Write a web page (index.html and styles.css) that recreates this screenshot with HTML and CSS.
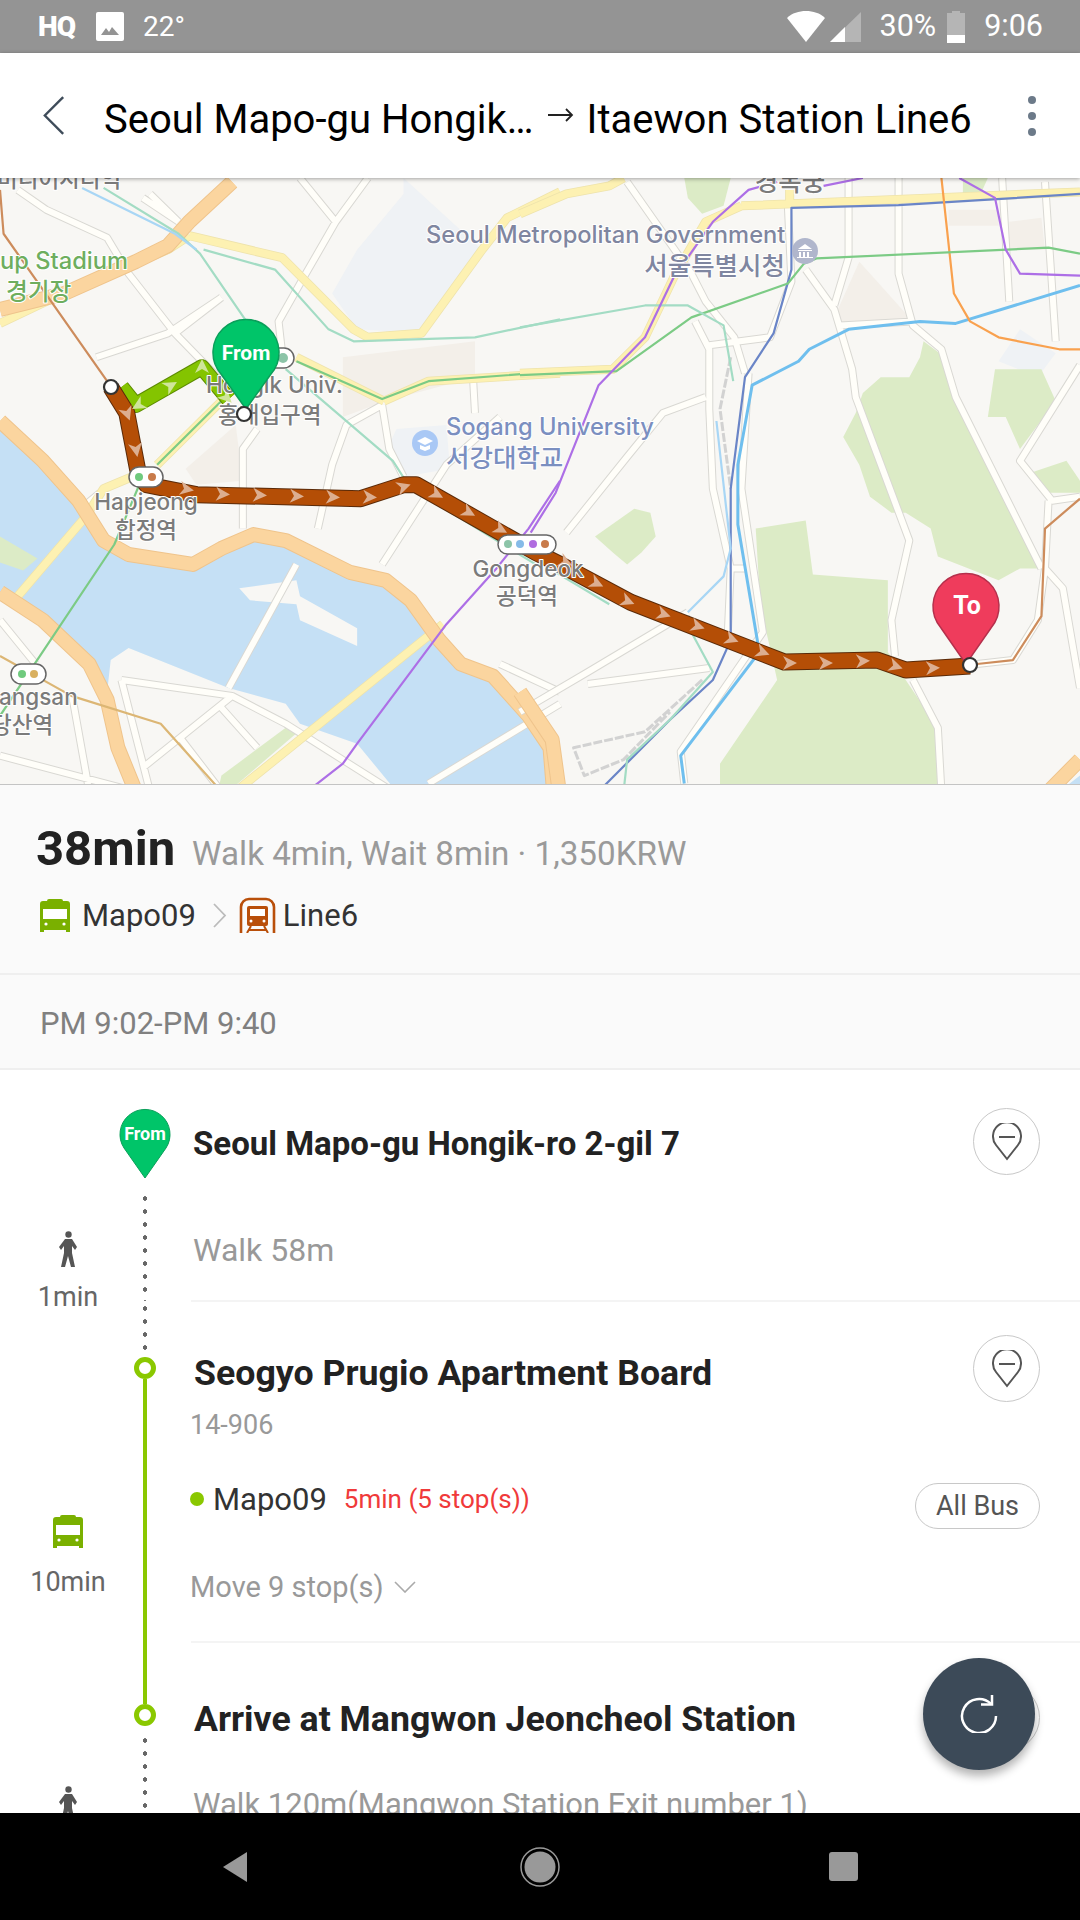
FILE: index.html
```html
<!DOCTYPE html>
<html lang="en">
<head>
<meta charset="utf-8">
<title>Route</title>
<link rel="stylesheet" href="styles.css">
</head>
<body>
<div class="screen">
  <div class="status">
    <span class="st-hq">HQ</span>
    <svg class="st-img" viewBox="0 0 28 29"><rect width="28" height="29" rx="2" fill="#fff"/><path d="M5 23l5-7 3 4 3-5 7 8z" fill="#949494"/></svg>
    <span class="st-text st-temp">22°</span>
    <span class="st-spacer"></span>
    <svg class="st-wifi" viewBox="0 0 38 31"><path d="M0 7C5 2 12 0 19 0s14 2 19 7L19 31z" fill="#fff"/></svg>
    <svg class="st-signal" viewBox="0 0 31 30"><path d="M31 0v30H0z" fill="#b5b5b5"/><path d="M15 15v15H0z" fill="#fff"/></svg>
    <span class="st-text st-pct">30%</span>
    <svg class="st-batt" viewBox="0 0 18 32"><path d="M5 2V0h8v2h5v30H0V2z" fill="#b5b5b5"/><path d="M0 24h18v8H0z" fill="#fff"/></svg>
    <span class="st-text st-clock">9:06</span>
  </div>

  <header class="bar">
    <svg class="bar-back" viewBox="0 0 24 42"><path d="M22 1L2 21l20 20" fill="none" stroke="#3f4c5a" stroke-width="2.6"/></svg>
    <span class="bar-from">Seoul Mapo-gu Hongik…</span>
    <svg class="bar-arrow" viewBox="0 0 26 14"><path d="M0 7h24M18 1l6 6-6 6" fill="none" stroke="#222" stroke-width="1.8"/></svg>
    <span class="bar-to">Itaewon Station Line6</span>
    <span class="bar-more"><i></i><i></i><i></i></span>
  </header>

  <div class="map">
    <svg class="map-svg" viewBox="0 178 1080 607" preserveAspectRatio="none">
      <rect x="0" y="178" width="1080" height="607" fill="#f8f7f4"/>
      <g class="zoom-a">
        <defs>
          <path id="roadsA" d="M50 50L130 100L300 170L360 260L490 410L620 530M500 130L420 60M270 470L470 410L620 320M490 410L620 320M840 20L940 130L1030 20M940 130L850 270L780 380L790 460M400 70L500 130M680 900L680 700L720 650M890 900L930 740L970 640L1070 590M1070 590L1090 700L1130 770M1325 530L1330 610M1070 990L1250 740L1400 620M830 990L640 1300M340 1280L650 1320L800 1390L1100 1560M650 1320L400 1500M620 1350L720 1450M200 1310L250 1560M0 1130L100 1240M0 1470L380 1560M500 1420L620 1560M1400 1240L1568 1310M1200 1540L1568 1340M340 1280L420 1560M280 810L240 840"/>
          <path id="yellowA" d="M530 165L790 220L990 400L1030 420L1180 410L1350 200L1420 120L1568 55M1075 580L1200 530L1568 510M1075 580L830 470M0 385L200 300L470 200L530 165M40 1080L240 870L290 800L370 770M660 1560L1240 1140M440 740L620 580"/>
          <path id="orangeA" d="M0 630L120 730L220 830L290 930L360 965L540 990L620 950L710 915L800 930L980 1010L1080 1030L1150 1080L1230 1180L1290 1240L1380 1270L1480 1370L1540 1450L1550 1560M0 1060L120 1130L250 1240L300 1330L330 1450L380 1560M0 350L180 310L380 230L470 190L530 130L650 30"/>
          <path id="greenRoute" d="M640 575L565 495L380 590L340 545"/>
          <path id="brownA" d="M310 545L355 610L385 750L410 790L550 815L1010 825L1130 790L1165 790L1500 960L1568 990"/>
        </defs>
        <path class="area pale" d="M1130 20L1350 200L1180 410L1000 400L930 310L1000 200L1130 60Z"/>
        <path class="area pale" d="M1110 650L1250 640L1260 750L1130 770L1090 690Z"/>
        <path class="area tan" d="M960 470L1330 430L1330 520L1080 580L960 620Z"/>
        <path class="area tan" d="M520 750L660 640L680 780L550 790Z"/>
        <path class="area water" d="M0 640L120 730L220 830L290 930L360 965L540 990L620 950L710 915L800 930L980 1010L1080 1030L1150 1080L1230 1180L1290 1240L1380 1270L1480 1370L1540 1450L1560 1560L1110 1560L1000 1440L840 1390L800 1340L640 1300L360 1200L310 1230L300 1310L250 1240L120 1130L0 1060Z"/>
        <path class="area island" d="M670 1050L830 1030L840 1070L1000 1150L1000 1195L840 1130L830 1090L700 1080Z"/>
        <path class="area park" d="M0 920L105 975L65 1005L0 985Z"/>
        <path class="area park" d="M620 1520L800 1400L835 1410L640 1560L610 1560Z"/>
        <use href="#roadsA" class="road-o"/><use href="#roadsA" class="road-i"/>
        <use href="#yellowA" class="yel-o"/><use href="#yellowA" class="yel-i"/>
        <use href="#orangeA" class="ora-o"/><use href="#orangeA" class="ora-i"/>
        <path class="sub mint" d="M290 45L500 160L560 210L690 380M800 500L1100 730L1150 800L1300 880L1500 990M570 200L770 250L920 400L990 430L1330 420L1568 375"/>
        <path class="sub sky" d="M230 45L490 160L550 200"/>
        <path class="sub brown" d="M0 50L10 160L300 530"/>
        <path class="sub green" d="M0 1370L320 940L390 790M440 740L620 580M830 480L1070 575L1200 530L1568 505"/>
        <path class="sub tanline" d="M0 1220L200 1320L450 1390L620 1560"/>
        <path class="sub purple" d="M860 1560L960 1490L1000 1440L1250 1140L1390 1000L1480 900L1568 780"/>
      </g>
      <g class="zoom-b">
        <defs>
          <path id="roadsB" d="M300 30L480 260L520 330L600 420L630 510M490 380L530 450L530 600L540 800L590 1000L580 1200M530 440L700 420L760 280L750 90M800 250L880 350L930 500L940 570L1090 930L1040 1130L1050 1220M920 20L920 220L880 340M1060 20L1060 260L1100 390L1180 450L1220 570L1460 1000M895 390L1100 380M1350 20L1370 330M1470 30L1500 430M1568 490L1400 730L1490 830L1568 820M1480 830L1470 1000L1520 1050L1568 1300M640 510L620 800L680 1160L450 1460L460 1540M1100 1280L1170 1400L1180 1560M520 570L400 610L300 720L130 910M590 1000L630 1000M0 1360L190 1260L470 1110M190 1290L530 1250M1280 1240L1380 1230L1450 1130L1470 1000"/>
          <path id="yellowB" d="M620 90L1568 55M755 50L755 90M620 90L520 130L430 270L350 420L260 500L0 510M0 110L130 60L250 40L290 20"/>
          <path id="orangeB" d="M0 1310L90 1430L110 1560M1480 1560L1568 1480"/>
          <path id="brownB" d="M112 990L310 1085L740 1235L1000 1230L1080 1255L1260 1245"/>
        </defs>
        <path class="area tan" d="M890 350L950 230L1000 280L1090 370L900 390Z"/>
        <path class="area tan" d="M1200 100L1340 100L1340 140L1200 140ZM1370 130L1460 120L1470 200L1370 200Z"/>
        <path class="area pale" d="M1340 480L1400 400L1500 460L1450 520Z"/>
        <path class="area park" d="M960 560L1010 520L1090 520L1120 470L1130 430L1190 470L1220 570L1470 1000L1400 1000L1340 1030L1170 970L1150 900L1080 860L1040 860L980 820L950 740L905 670L940 610Z"/>
        <path class="area park" d="M660 900L800 880L820 1015L1030 1030L1030 1210L1080 1280L1170 1400L1180 1560L560 1560L560 1490L720 1280L690 1160L670 1050Z"/>
        <path class="area park" d="M210 920L320 850L365 860L380 920L340 960L300 990L260 960Z"/>
        <path class="area park" d="M460 20L590 20L570 90L510 110L470 70Z"/>
        <path class="area park" d="M1330 500L1460 500L1500 580L1400 700L1360 620L1310 620Z"/>
        <path class="area park" d="M1430 760L1530 730L1568 780L1568 810L1480 810Z"/>
        <path class="area park" d="M1240 20L1310 20L1290 60L1240 60Z"/>
        <path class="area water" d="M0 1420L50 1440L70 1560L0 1560ZM1510 1560L1568 1520L1568 1560Z"/>
        <use href="#roadsB" class="road-o"/><use href="#roadsB" class="road-i"/>
        <use href="#yellowB" class="yel-o"/><use href="#yellowB" class="yel-i"/>
        <use href="#orangeB" class="ora-o"/><use href="#orangeB" class="ora-i"/>
        <path class="railway" d="M590 470L560 600L590 800M510 1280L350 1410L150 1450L180 1520L290 1480L420 1360"/>
        <path class="sub indigo" d="M220 1560L420 1380L540 1280L590 1180L590 800L630 520L710 410L760 250L760 95L1060 88L1300 75L1568 60"/>
        <path class="sub bright" d="M460 1540L450 1470L670 1210L610 890L610 740L650 540L780 480L810 450L920 400L1120 380L1220 385L1568 290"/>
        <path class="sub amber" d="M1180 20L1215 310L1260 380L1340 420L1510 450L1568 450"/>
        <path class="sub green" d="M0 515L270 505L480 370L750 285L795 235L830 222L1480 195L1568 210"/>
        <path class="sub mint" d="M0 395L350 340L470 340L570 390L597 530M100 1010L250 1090M480 1160L540 1260L420 1380L300 1480L290 1560"/>
        <path class="sub sky" d="M550 630L590 950L570 1020L470 1110"/>
        <path class="sub brown" d="M1280 1240L1380 1230L1460 1120L1470 900L1568 825"/>
        <path class="sub purple" d="M30 910L100 810L220 540L350 420L430 270L540 130L640 50L720 30M850 40L960 20M1230 20L1330 70L1360 200L1400 260L1568 265"/>
      </g>

      <g class="zoom-a">
        <use href="#greenRoute" class="route-g-o"/><use href="#greenRoute" class="route-g-i"/>
        <use href="#brownA" class="route-o"/><use href="#brownA" class="route-i"/>
      </g>
      <g class="zoom-b">
        <use href="#brownB" class="route-o"/><use href="#brownB" class="route-i"/>
      </g>
      <defs><path id="chev" d="M-6-7L8 0L-6 7L-2 0Z"/></defs>
      <g class="arrows-g">
        <use href="#chev" transform="translate(139 405) rotate(150)"/>
        <use href="#chev" transform="translate(170 386) rotate(-30)"/>
        <use href="#chev" transform="translate(202 367) rotate(-90)"/>
        <use href="#chev" transform="translate(226 397) rotate(45)"/>
      </g>
      <g class="arrows">
        <use href="#chev" transform="translate(127 413) rotate(70)"/>
        <use href="#chev" transform="translate(136 449) rotate(80)"/>
        <use href="#chev" transform="translate(186 489) rotate(10)"/>
        <use href="#chev" transform="translate(222 494) rotate(3)"/>
        <use href="#chev" transform="translate(259 495) rotate(3)"/>
        <use href="#chev" transform="translate(296 496) rotate(3)"/>
        <use href="#chev" transform="translate(332 497) rotate(3)"/>
        <use href="#chev" transform="translate(369 497) rotate(3)"/>
        <use href="#chev" transform="translate(403 487) rotate(-18)"/>
        <use href="#chev" transform="translate(436 494) rotate(28)"/>
        <use href="#chev" transform="translate(468 512) rotate(28)"/>
        <use href="#chev" transform="translate(500 529) rotate(28)"/>
        <use href="#chev" transform="translate(565 562) rotate(25)"/>
        <use href="#chev" transform="translate(596 583) rotate(25)"/>
        <use href="#chev" transform="translate(627 601) rotate(22)"/>
        <use href="#chev" transform="translate(663 614) rotate(18)"/>
        <use href="#chev" transform="translate(697 626) rotate(18)"/>
        <use href="#chev" transform="translate(731 639) rotate(20)"/>
        <use href="#chev" transform="translate(762 652) rotate(20)"/>
        <use href="#chev" transform="translate(789 663) rotate(0)"/>
        <use href="#chev" transform="translate(825 663) rotate(0)"/>
        <use href="#chev" transform="translate(862 661) rotate(-2)"/>
        <use href="#chev" transform="translate(895 666) rotate(18)"/>
        <use href="#chev" transform="translate(932 668) rotate(-2)"/>
      </g>

      <text class="lb lb-gray lb-sm" x="-3" y="187">미디어시티역</text>
      <text class="lb lb-gray lb-ko" x="790" y="191" text-anchor="middle">경복궁</text>
      <text class="lb lb-navy" x="426" y="243">Seoul Metropolitan Government</text>
      <text class="lb lb-navy lb-ko" x="785" y="275" text-anchor="end">서울특별시청</text>
      <circle cx="805" cy="251" r="13" fill="#b0b6cc"/>
      <path d="M798 249l7-5 7 5zM798 250h14v1h-14zM799 252h2v5h-2zM803 252h2v5h-2zM807 252h2v5h-2zM797 257h16v1h-16z" fill="#fff"/>
      <text class="lb lb-green" x="0" y="269">up Stadium</text>
      <text class="lb lb-green" x="6" y="300">경기장</text>
      <text class="lb lb-gray lb-sm" x="206" y="393">Hongik Univ.</text>
      <text class="lb lb-gray lb-sm" x="218" y="423">홍대입구역</text>
      <circle cx="425" cy="443" r="13" fill="#a9c8f5"/>
      <path d="M417 441l8-4 8 4-8 4zM420 445v4l5 2 5-2v-4l-5 2z" fill="#fff"/>
      <text class="lb lb-blue" x="446" y="435">Sogang University</text>
      <text class="lb lb-blue lb-ko" x="446" y="467">서강대학교</text>
      <text class="lb lb-gray lb-sm" x="146" y="510" text-anchor="middle">Hapjeong</text>
      <text class="lb lb-gray lb-sm" x="146" y="538" text-anchor="middle">합정역</text>
      <text class="lb lb-gray lb-sm" x="528" y="577" text-anchor="middle">Gongdeok</text>
      <text class="lb lb-gray lb-sm" x="527" y="604" text-anchor="middle">공덕역</text>
      <text class="lb lb-gray lb-sm" x="-1" y="705">angsan</text>
      <text class="lb lb-gray lb-sm" x="-9" y="733">당산역</text>

      <rect class="pill" x="263" y="348" width="31" height="20" rx="10"/><circle cx="283" cy="358" r="5" fill="#8cc4a8"/>
      <rect class="pill" x="129" y="467" width="34" height="20" rx="10"/><circle cx="139" cy="477" r="4" fill="#6fca7e"/><circle cx="152" cy="477" r="4" fill="#c87a4a"/>
      <rect class="pill" x="498" y="535" width="58" height="19" rx="9.5"/><circle cx="508" cy="544" r="4" fill="#8cc4a8"/><circle cx="520" cy="544" r="4" fill="#86bbe8"/><circle cx="533" cy="544" r="4" fill="#b06ce0"/><circle cx="545" cy="544" r="4" fill="#c87a4a"/>
      <rect class="pill" x="11" y="664" width="35" height="20" rx="10"/><circle cx="22" cy="674" r="4" fill="#6fca7e"/><circle cx="34" cy="674" r="4" fill="#d9b060"/>

      <circle class="node" cx="111" cy="387" r="7"/>
      <path class="pin-g" d="M246 409L221 374A33 33 0 1 1 271 374Z"/>
      <text class="pin-text" x="246" y="360" text-anchor="middle">From</text>
      <circle class="node" cx="244" cy="414" r="7"/>
      <path class="pin-r" d="M966 664L941 628A33 33 0 1 1 991 628Z"/>
      <text class="pin-text pin-text-to" x="967" y="614" text-anchor="middle">To</text>
      <circle class="node" cx="970" cy="665" r="7"/>
    </svg>
  </div>

  <section class="summary">
    <div class="sum-top"><span class="sum-time">38min</span><span class="sum-sub">Walk 4min, Wait 8min · 1,350KRW</span></div>
    <div class="sum-lines">
      <svg class="ic-bus" viewBox="0 0 30 33"><path d="M0 5q0-3 3-3h4q0-2 2-2h12q2 0 2 2h4q3 0 3 3v28h-4v-2H4v2H0z" fill="#7ab000"/><path d="M3 10h24v10H3z" fill="#fff"/><circle cx="6" cy="25" r="1.6" fill="#fff"/><circle cx="24" cy="25" r="1.6" fill="#fff"/></svg>
      <span class="sum-name">Mapo09</span>
      <svg class="ic-next" viewBox="0 0 14 25"><path d="M1 1l11 11.500L1 24" fill="none" stroke="#bbb" stroke-width="1.8"/></svg>
      <svg class="ic-train" viewBox="0 0 37 36"><path d="M2 36V10a8 8 0 0 1 8-8h17a8 8 0 0 1 8 8v26" fill="none" stroke="#b94f0a" stroke-width="2.600"/><rect x="8" y="9" width="21" height="20" rx="2" fill="#b94f0a"/><rect x="11" y="12" width="15" height="7" fill="#fff"/><circle cx="12" cy="24" r="1.500" fill="#fff"/><circle cx="25" cy="24" r="1.500" fill="#fff"/><path d="M12 29l-4 7M25 29l4 7M9 33h19" fill="none" stroke="#b94f0a" stroke-width="2"/></svg>
      <span class="sum-name">Line6</span>
    </div>
  </section>
  <div class="range">PM 9:02-PM 9:40</div>

  <section class="timeline">
    <div class="seg seg-from">
      <div class="seg-time">
        <svg class="ic-walk" viewBox="0 0 21 36"><circle cx="10.500" cy="3.500" r="3.200" fill="#555"/><path d="M7 8h7l5 8-2 3-3-4v7l3 14h-4l-3-11-3 11H3l3-14v-7l-3 4-2-3z" fill="#555"/></svg>
        <span class="time-text">1min</span>
      </div>
      <div class="rail">
        <svg class="rail-pin" viewBox="0 0 52 72"><path d="M26 71L5 41A25 25 0 1 1 47 41Z" fill="#00c569" stroke="#0a9f5a"/><text class="rail-pin-text" x="26" y="33" text-anchor="middle">From</text></svg>
        <span class="dots dots-a"></span>
      </div>
      <div class="body">
        <div class="head"><h2 class="title">Seoul Mapo-gu Hongik-ro 2-gil 7</h2>
          <span class="round"><svg class="ic-pin" viewBox="0 0 30 38"><path d="M15 36L4 22a14 14 0 1 1 22 0Z M7 14h16" fill="none" stroke="#555" stroke-width="2"/></svg></span>
        </div>
        <p class="walk walk-a">Walk 58m</p>
      </div>
    </div>

    <div class="seg seg-bus">
      <div class="seg-time">
        <svg class="ic-bus" viewBox="0 0 30 33"><path d="M0 5q0-3 3-3h4q0-2 2-2h12q2 0 2 2h4q3 0 3 3v28h-4v-2H4v2H0z" fill="#7ab000"/><path d="M3 10h24v10H3z" fill="#fff"/><circle cx="6" cy="25" r="1.600" fill="#fff"/><circle cx="24" cy="25" r="1.600" fill="#fff"/></svg>
        <span class="time-text">10min</span>
      </div>
      <div class="rail">
        <span class="dots dots-b"></span>
        <span class="ring"></span>
        <span class="solid"></span>
      </div>
      <div class="body">
        <div class="head head-b"><h2 class="title">Seogyo Prugio Apartment Board</h2>
          <span class="round"><svg class="ic-pin" viewBox="0 0 30 38"><path d="M15 36L4 22a14 14 0 1 1 22 0Z M7 14h16" fill="none" stroke="#555" stroke-width="2"/></svg></span>
        </div>
        <p class="stop-id">14-906</p>
        <div class="bus-row">
          <span class="bus-dot"></span><span class="bus-name">Mapo09</span><span class="bus-eta">5min (5 stop(s))</span>
          <span class="pill-btn">All Bus</span>
        </div>
        <p class="move">Move 9 stop(s)<svg class="ic-down" viewBox="0 0 22 12"><path d="M1 1l10 10L21 1" fill="none" stroke="#aaa" stroke-width="1.600"/></svg></p>
      </div>
    </div>

    <div class="seg seg-end">
      <div class="seg-time">
        <svg class="ic-walk" viewBox="0 0 21 36"><circle cx="10.500" cy="3.500" r="3.200" fill="#555"/><path d="M7 8h7l5 8-2 3-3-4v7l3 14h-4l-3-11-3 11H3l3-14v-7l-3 4-2-3z" fill="#555"/></svg>
      </div>
      <div class="rail">
        <span class="solid"></span>
        <span class="ring"></span>
        <span class="dots dots-c"></span>
      </div>
      <div class="body">
        <div class="head head-c"><h2 class="title">Arrive at Mangwon Jeoncheol Station</h2><span class="round"></span></div>
        <p class="walk walk-c">Walk 120m(Mangwon Station Exit number 1)</p>
      </div>
    </div>

    <button class="fab" type="button" aria-label="Refresh"><svg viewBox="0 0 38 38"><path d="M31 9A17 17 0 1 0 36 21" fill="none" stroke="#fff" stroke-width="2.500"/><path d="M21 9.500h11V0" fill="none" stroke="#fff" stroke-width="2.500"/></svg></button>
  </section>

  <nav class="nav">
    <svg class="nav-back" viewBox="0 0 25 30"><path d="M25 0v30L1 15z" fill="#999"/></svg>
    <svg class="nav-home" viewBox="0 0 40 40"><circle cx="20" cy="20" r="19" fill="none" stroke="#999" stroke-width="1.500"/><circle cx="20" cy="20" r="15.500" fill="#999"/></svg>
    <span class="nav-recent"></span>
  </nav>
</div>
</body>
</html>
```
FILE: styles.css
```css
* { box-sizing: border-box; }
html, body { margin: 0; padding: 0; }
body { font-family: Roboto, "Noto Sans CJK KR", sans-serif; background: #fff; }
.screen { width: 1080px; height: 1920px; display: flex; flex-direction: column; overflow: hidden; position: relative; }

/* status bar */
.status { height: 53px; background: #949494; color: #fff; display: flex; align-items: center; padding: 0 37px 0 38px; flex: none; }
.st-hq { font-size: 28px; font-weight: 900; letter-spacing: -1px; width: 58px; }
.st-img { width: 28px; height: 29px; }
.st-text { font-size: 28px; font-weight: 400; line-height: 1; }
.st-temp { margin-left: 19px; }
.st-spacer { flex: 1; }
.st-wifi { width: 38px; height: 31px; }
.st-signal { width: 31px; height: 30px; margin-left: 5px; }
.st-pct { margin-left: 19px; font-size: 30.500px; }
.st-batt { width: 18px; height: 32px; margin-left: 11px; }
.st-clock { margin-left: 19px; font-size: 30.500px; }

/* toolbar */
.bar { height: 125px; background: #fff; display: flex; align-items: center; flex: none; padding-left: 43px; position: relative; z-index: 2; box-shadow: 0 1px 4px rgba(0,0,0,.35); }
.bar-back { width: 22px; height: 41px; }
.bar-from, .bar-to { font-size: 40px; color: #000; white-space: nowrap; padding-top: 7px; }
.bar-from { margin-left: 39px; }
.bar-arrow { width: 26px; height: 14px; margin-left: 14px; margin-bottom: 2px; }
.bar-to { margin-left: 13px; }
.bar-more { display: flex; flex-direction: column; gap: 8px; margin-left: auto; margin-right: 44px; }
.bar-more i { display: block; width: 8px; height: 8px; border-radius: 50%; background: #6c7a89; }

/* map */
.map { height: 607px; flex: none; border-bottom: 1px solid #c4c4c4; overflow: hidden; }
.map-svg { display: block; width: 1080px; height: 607px; }
.zoom-a { transform: translate(0px, 170px) scale(.35714, .39841); }
.zoom-b { transform: translate(520px, 170px) scale(.35714, .39841); }
.zoom-a path, .zoom-b path { vector-effect: non-scaling-stroke; }
.area { stroke: none; }
.water { fill: #c5e0f5; }
.park { fill: #dcebc6; }
.tan { fill: #f3efe9; }
.pale { fill: #eff2f5; }
.island { fill: #f8f7f4; }
.road-o, .road-i, .yel-o, .yel-i, .ora-o, .ora-i, .route-o, .route-i, .route-g-o, .route-g-i, .sub, .railway { fill: none; stroke-linejoin: round; }
.road-o { stroke: #d9d8d3; stroke-width: 8; }
.road-i { stroke: #fffef9; stroke-width: 6; }
.yel-o { stroke: #eee3ac; stroke-width: 9; }
.yel-i { stroke: #fdf1b2; stroke-width: 7.500; }
.ora-o { stroke: #efc48c; stroke-width: 15; }
.ora-i { stroke: #fbd59f; stroke-width: 13; }
.sub { stroke-width: 2.200; }
.mint { stroke: #a3dcc4; }
.sky { stroke: #a8d6f5; }
.brown { stroke: #cd8c5c; }
.green { stroke: #7ccb85; }
.tanline { stroke: #dcb674; }
.purple { stroke: #ad6fe6; }
.indigo { stroke: #6a85c7; }
.bright { stroke: #6fbfee; stroke-width: 3; }
.amber { stroke: #f9a14e; }
.railway { stroke: #d2d2d2; stroke-width: 3; stroke-dasharray: 9 2; }
.route-o { stroke: #5a2a08; stroke-width: 17; }
.route-i { stroke: #b44e06; stroke-width: 15; }
.route-g-o { stroke: #5c8a00; stroke-width: 16; }
.route-g-i { stroke: #84c400; stroke-width: 14; }
.arrows { fill: #dcae90; }
.arrows-g { fill: #cfe59a; }
.lb { font-family: Inter, "Noto Sans CJK KR", sans-serif; font-size: 23.700px; font-weight: 500; paint-order: stroke; stroke: #fff; stroke-width: 2px; stroke-linejoin: round; }
.lb-sm { font-size: 22.500px; }
.lb-ko { font-size: 25.500px; }
.lb-gray { fill: #7b7b7b; }
.lb-navy { fill: #7f86a0; }
.lb-blue { fill: #7b8fc0; }
.lb-green { fill: #6eae5e; }
.pill { fill: #fff; stroke: #666; stroke-width: 1.500; }
.node { fill: #fff; stroke: #333; stroke-width: 2.200; }
.pin-g { fill: #00c569; stroke: #0a9f5a; stroke-width: 1.500; }
.pin-r { fill: #ef3c5c; stroke: #b5304c; stroke-width: 1.500; }
.pin-text { font-family: Roboto, sans-serif; font-size: 21px; font-weight: 700; fill: #fff; }
.pin-text-to { font-size: 25px; }

/* summary */
.summary { height: 190px; flex: none; background: #fafafa; border-bottom: 2px solid #efefef; padding: 36px 0 0 37px; }
.sum-top { display: flex; align-items: baseline; }
.sum-time { font-size: 49px; font-weight: 700; color: #222; line-height: 56px; margin-left: -1px; }
.sum-sub { font-size: 33.200px; color: #9a9a9a; margin-left: 17px; }
.sum-lines { display: flex; align-items: center; margin-top: 20px; padding-left: 3px; height: 36px; }
.ic-bus { width: 30px; height: 33px; display: block; flex: none; }
.sum-name { font-size: 31px; color: #333; margin-left: 12px; }
.ic-next { width: 14px; height: 25px; margin-left: 17px; flex: none; }
.ic-train { width: 37px; height: 36px; margin-left: 12px; flex: none; }
.sum-lines .ic-train + .sum-name { margin-left: 7px; }
.range { height: 95px; flex: none; background: #fafafa; border-bottom: 2px solid #efefef; padding: 3px 0 0 40px; display: flex; align-items: center; font-size: 31px; color: #808080; }

/* timeline */
.timeline { flex: 1; min-height: 0; position: relative; overflow: hidden; background: #fff; }
.seg { display: grid; grid-template-columns: 134px 22px 1fr; grid-template-rows: minmax(0, 1fr); }
.seg-from { height: 232px; }
.seg-bus { height: 341px; }
.seg-end { height: 200px; }
.seg-time { display: flex; flex-direction: column; align-items: center; width: 136px; position: relative; z-index: 1; }
.seg-from .seg-time { padding-top: 161px; }
.seg-bus .seg-time { padding-top: 213px; }
.seg-end .seg-time { padding-top: 143px; }
.ic-walk { width: 21px; height: 36px; display: block; flex: none; }
.seg-time .ic-bus { flex: none; }
.time-text { font-size: 27px; color: #666; margin-top: 15px; line-height: 30px; flex: none; }
.seg-bus .time-text { margin-top: 19px; }
.rail { display: flex; flex-direction: column; align-items: center; }
.rail-pin { width: 52px; height: 72px; flex: none; margin-top: 37px; overflow: visible; }
.rail-pin-text { font-family: Roboto, sans-serif; font-size: 18px; font-weight: 700; fill: #fff; }
.dots { display: block; width: 6px; background: radial-gradient(circle at 50% 50%, #666 2px, transparent 2.500px) 0 0 / 6px 13px repeat-y; flex: none; margin-left: -1px; }
.dots-a { height: 109px; margin-top: 13px; }
.dots-b { height: 55px; }
.dots-c { flex: 1; margin-top: 8px; }
.ring { width: 22px; height: 22px; border: 5px solid #8ac800; border-radius: 50%; background: #fff; flex: none; }
.solid { width: 4px; background: #8ac800; flex: 1; }
.seg-end .solid { flex: none; height: 61px; }
.body { margin-left: 35px; border-bottom: 2px solid #f4f4f4; padding-right: 40px; }
.seg-end .body { border-bottom: 0; }
.head { display: flex; justify-content: space-between; align-items: flex-start; padding-top: 38px; }
.head-b { padding-top: 33px; }
.head-c { padding-top: 41px; }
.title { margin: 0; font-weight: 700; color: #222; }
.seg-from .title { font-size: 33px; line-height: 40px; padding: 16px 0 0 2px; }
.seg-bus .title { font-size: 35.700px; line-height: 44px; padding: 16px 0 0 3px; }
.seg-end .title { font-size: 35.700px; line-height: 44px; padding: 13px 0 0 3px; }
.round { width: 67px; height: 67px; border: 1.500px solid #c8c8c8; border-radius: 50%; display: flex; align-items: center; justify-content: center; flex: none; background: #fff; }
.ic-pin { width: 30px; height: 38px; }
.walk { margin: 0; font-size: 32px; color: #999; line-height: 40px; padding-left: 2px; }
.walk-a { margin-top: 55px; }
.walk-c { margin-top: 34px; font-size: 31px; }
.stop-id { margin: 7px 0 0 -1px; font-size: 27px; color: #999; line-height: 32px; }
.bus-row { display: flex; align-items: center; margin-top: 35px; height: 46px; }
.bus-dot { width: 14px; height: 14px; border-radius: 50%; background: #8ac800; margin-left: -1px; }
.bus-name { font-size: 31px; color: #333; margin-left: 9px; }
.bus-eta { font-size: 26px; color: #f03a3a; margin-left: 17px; }
.pill-btn { margin-left: auto; margin-top: 14px; width: 125px; height: 46px; border: 1.500px solid #c8c8c8; border-radius: 23px; display: flex; align-items: center; justify-content: center; font-size: 27px; color: #555; }
.move { margin: 47px 0 0 -1px; font-size: 29px; color: #999; line-height: 36px; display: flex; align-items: center; }
.ic-down { width: 22px; height: 12px; margin-left: 10px; }
.fab { position: absolute; right: 45px; top: 588px; width: 112px; height: 112px; border: 0; padding: 0; border-radius: 50%; background: #3c4a58; box-shadow: 0 6px 10px rgba(0,0,0,.3); display: flex; align-items: center; justify-content: center; }
.fab svg { width: 38px; height: 38px; }

/* nav */
.nav { height: 107px; flex: none; background: #000; position: relative; z-index: 3; display: flex; align-items: center; padding-left: 222px; }
.nav-back { width: 25px; height: 30px; }
.nav-home { width: 40px; height: 40px; margin-left: 273px; }
.nav-recent { width: 29px; height: 29px; border-radius: 3px; background: #999; margin-left: 269px; }
```
